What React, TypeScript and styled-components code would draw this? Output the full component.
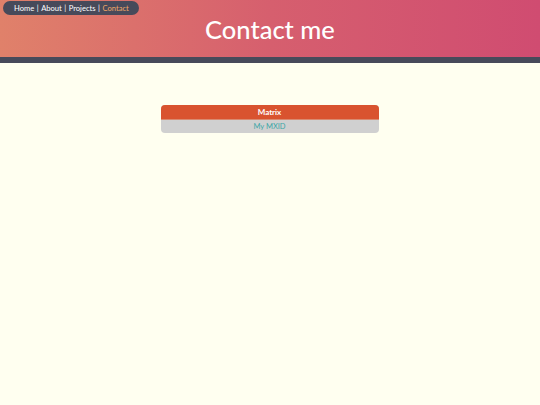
import styled, { createGlobalStyle } from "styled-components";

const GlobalStyle = createGlobalStyle`
  html, body {
    margin: 0;
    padding: 0;
    background: #fffff0;
    font-family: Lato, "Noto Sans", sans-serif;
  }
`;

const Header = styled.header`
  position: relative;
  height: 57px;
  background: linear-gradient(90deg, #e0816a 0%, #d65f6e 50%, #d04c71 100%);
  border-bottom: 6px solid #474a5a;
  display: flex;
  align-items: center;
  justify-content: center;
`;

const Nav = styled.nav`
  position: absolute;
  top: 1px;
  left: 3px;
  height: 14px;
  padding: 0 10px 0 11px;
  background: #474a5a;
  border-radius: 7px;
  display: flex;
  align-items: center;
  font-size: 7.6px;
  color: #ffffff;
`;

const NavLink = styled.span<{ active?: boolean }>`
  color: ${({ active }) => (active ? "#f0a868" : "#ffffff")};
`;

const Sep = styled.span`
  margin: 0 2.5px;
`;

const Title = styled.h1`
  margin: 0;
  font-size: 25.5px;
  font-weight: 500;
  color: #ffffff;
`;

const Main = styled.main`
  display: flex;
  justify-content: center;
  padding-top: 42px;
`;

const Card = styled.div`
  width: 218px;
  margin-left: -1px;
  border-radius: 4px;
  overflow: hidden;
  background: #d0d0d0;
`;

const CardHead = styled.div`
  height: 14px;
  background: #d9532f;
  border-bottom: 1px solid #d98a70;
  color: #ffffff;
  font-size: 8px;
  font-weight: 700;
  display: flex;
  align-items: center;
  justify-content: center;
`;

const CardBody = styled.div`
  height: 13px;
  color: #3aa6a6;
  font-size: 7.5px;
  display: flex;
  align-items: center;
  justify-content: center;
`;

const pages = ["Home", "About", "Projects", "Contact"];

export default function App() {
  return (
    <>
      <GlobalStyle />
      <Header>
        <Nav>
          {pages.map((p, i) => (
            <span key={p}>
              <NavLink active={p === "Contact"}>{p}</NavLink>
              {i < pages.length - 1 && <Sep>|</Sep>}
            </span>
          ))}
        </Nav>
        <Title>Contact me</Title>
      </Header>
      <Main>
        <Card>
          <CardHead>Matrix</CardHead>
          <CardBody>My MXID</CardBody>
        </Card>
      </Main>
    </>
  );
}
